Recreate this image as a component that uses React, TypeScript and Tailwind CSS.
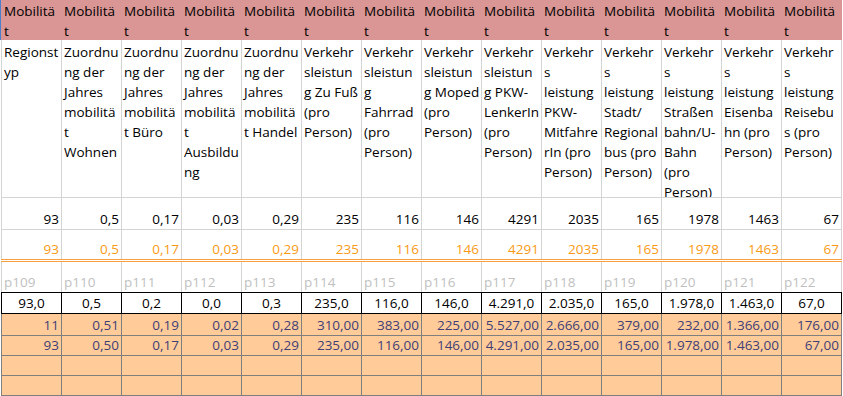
import React from "react";

const headerLines: string[][] = [
  ["Regionst", "yp"],
  ["Zuordnu", "ng der", "Jahres", "mobilitä", "t", "Wohnen"],
  ["Zuordnu", "ng der", "Jahres", "mobilitä", "t Büro"],
  ["Zuordnu", "ng der", "Jahres", "mobilitä", "t", "Ausbildu", "ng"],
  ["Zuordnu", "ng der", "Jahres", "mobilitä", "t Handel"],
  ["Verkehr", "sleistun", "g Zu Fuß", "(pro", "Person)"],
  ["Verkehr", "sleistun", "g", "Fahrrad", "(pro", "Person)"],
  ["Verkehr", "sleistun", "g Moped", "(pro", "Person)"],
  ["Verkehr", "sleistun", "g PKW-", "LenkerIn", "(pro", "Person)"],
  ["Verkehr", "s", "leistung", "PKW-", "Mitfahre", "rIn (pro", "Person)"],
  ["Verkehr", "s", "leistung", "Stadt/", "Regional", "bus (pro", "Person)"],
  ["Verkehr", "s", "leistung", "Straßen", "bahn/U-", "Bahn", "(pro", "Person)"],
  ["Verkehr", "s", "leistung", "Eisenba", "hn (pro", "Person)"],
  ["Verkehr", "s", "leistung", "Reisebu", "s (pro", "Person)"],
];

const raw = ["93", "0,5", "0,17", "0,03", "0,29", "235", "116", "146", "4291", "2035", "165", "1978", "1463", "67"];
const codes = ["p109", "p110", "p111", "p112", "p113", "p114", "p115", "p116", "p117", "p118", "p119", "p120", "p121", "p122"];
const rounded = ["93,0", "0,5", "0,2", "0,0", "0,3", "235,0", "116,0", "146,0", "4.291,0", "2.035,0", "165,0", "1.978,0", "1.463,0", "67,0"];
const inputA = ["11", "0,51", "0,19", "0,02", "0,28", "310,00", "383,00", "225,00", "5.527,00", "2.666,00", "379,00", "232,00", "1.366,00", "176,00"];
const inputB = ["93", "0,50", "0,17", "0,03", "0,29", "235,00", "116,00", "146,00", "4.291,00", "2.035,00", "165,00", "1.978,00", "1.463,00", "67,00"];
const empty = Array(14).fill("");

type RowProps = {
  cells: React.ReactNode[];
  rowClass: string;
  cellClass: string;
};

const Row = ({ cells, rowClass, cellClass }: RowProps) => {
  return (
    <div className={`flex w-[841px] ${rowClass}`}>
      {cells.map((c, i) => (
        <div
          key={i}
          className={`${i === 13 ? "w-[61px] border-r" : "w-[60px]"} border-l overflow-hidden whitespace-nowrap ${cellClass}`}
        >
          {c}
        </div>
      ))}
    </div>
  );
};

const App = () => {
  return (
    <div className="flex w-[843px] h-[396px] overflow-hidden bg-white font-['Open_Sans',sans-serif] text-[13.5px] leading-[20px] text-black">
      {/* left edge, selection mark */}
      <div className="flex flex-col w-px shrink-0">
        <div className="h-[40px] bg-[#4a7fd0]"></div>
      </div>

      <div className="flex flex-col shrink-0">
        {/* Kopfzeile */}
        <Row
          cells={headerLines.map(() => (
            <>
              <div>Mobilitä</div>
              <div>t</div>
            </>
          ))}
          rowClass="h-[40px] bg-[#da9694]"
          cellClass="border-[#da9694] pl-[2px] pt-px"
        />

        {/* Beschreibung */}
        <Row
          cells={headerLines.map((lines) => (
            <>
              {lines.map((l, j) => (
                <div key={j}>{l}</div>
              ))}
            </>
          ))}
          rowClass="h-[158px] border-b border-[#d4d4d4]"
          cellClass="border-[#d4d4d4] pl-[2px] pt-[2px]"
        />

        {/* Werte */}
        <Row
          cells={raw}
          rowClass="h-[33px] border-b border-[#d4d4d4]"
          cellClass="border-[#d4d4d4] flex items-end justify-end pr-[2px]"
        />
        <Row
          cells={raw}
          rowClass="h-[32px] border-b-[3px] border-double border-[#f7a040]"
          cellClass="border-[#d4d4d4] flex items-end justify-end pr-[2px] text-[#fa9a14]"
        />
        <Row
          cells={codes}
          rowClass="h-[32px] border-b border-black"
          cellClass="border-[#d4d4d4] flex items-end pl-[2px] text-[#bfbfbf]"
        />
        <Row
          cells={rounded}
          rowClass="h-[21px] border-b border-black"
          cellClass="border-black flex items-center justify-center"
        />

        {/* Eingabe */}
        <div className="flex flex-col bg-[#ffcc99]">
          <Row
            cells={inputA}
            rowClass="h-[22px] border-b border-[#7f7f7f]"
            cellClass="border-[#7f7f7f] flex items-center justify-end pr-[2px] text-[#3f3f76]"
          />
          <Row
            cells={inputB}
            rowClass="h-[20px] border-b border-[#7f7f7f]"
            cellClass="border-[#7f7f7f] flex items-end justify-end pr-[2px] text-[#3f3f76]"
          />
          <Row
            cells={empty}
            rowClass="h-[20px] border-b border-[#7f7f7f]"
            cellClass="border-[#7f7f7f]"
          />
          <Row
            cells={empty}
            rowClass="h-[20px] border-b border-[#7f7f7f]"
            cellClass="border-[#7f7f7f]"
          />
        </div>
      </div>
    </div>
  );
};

export default App;
